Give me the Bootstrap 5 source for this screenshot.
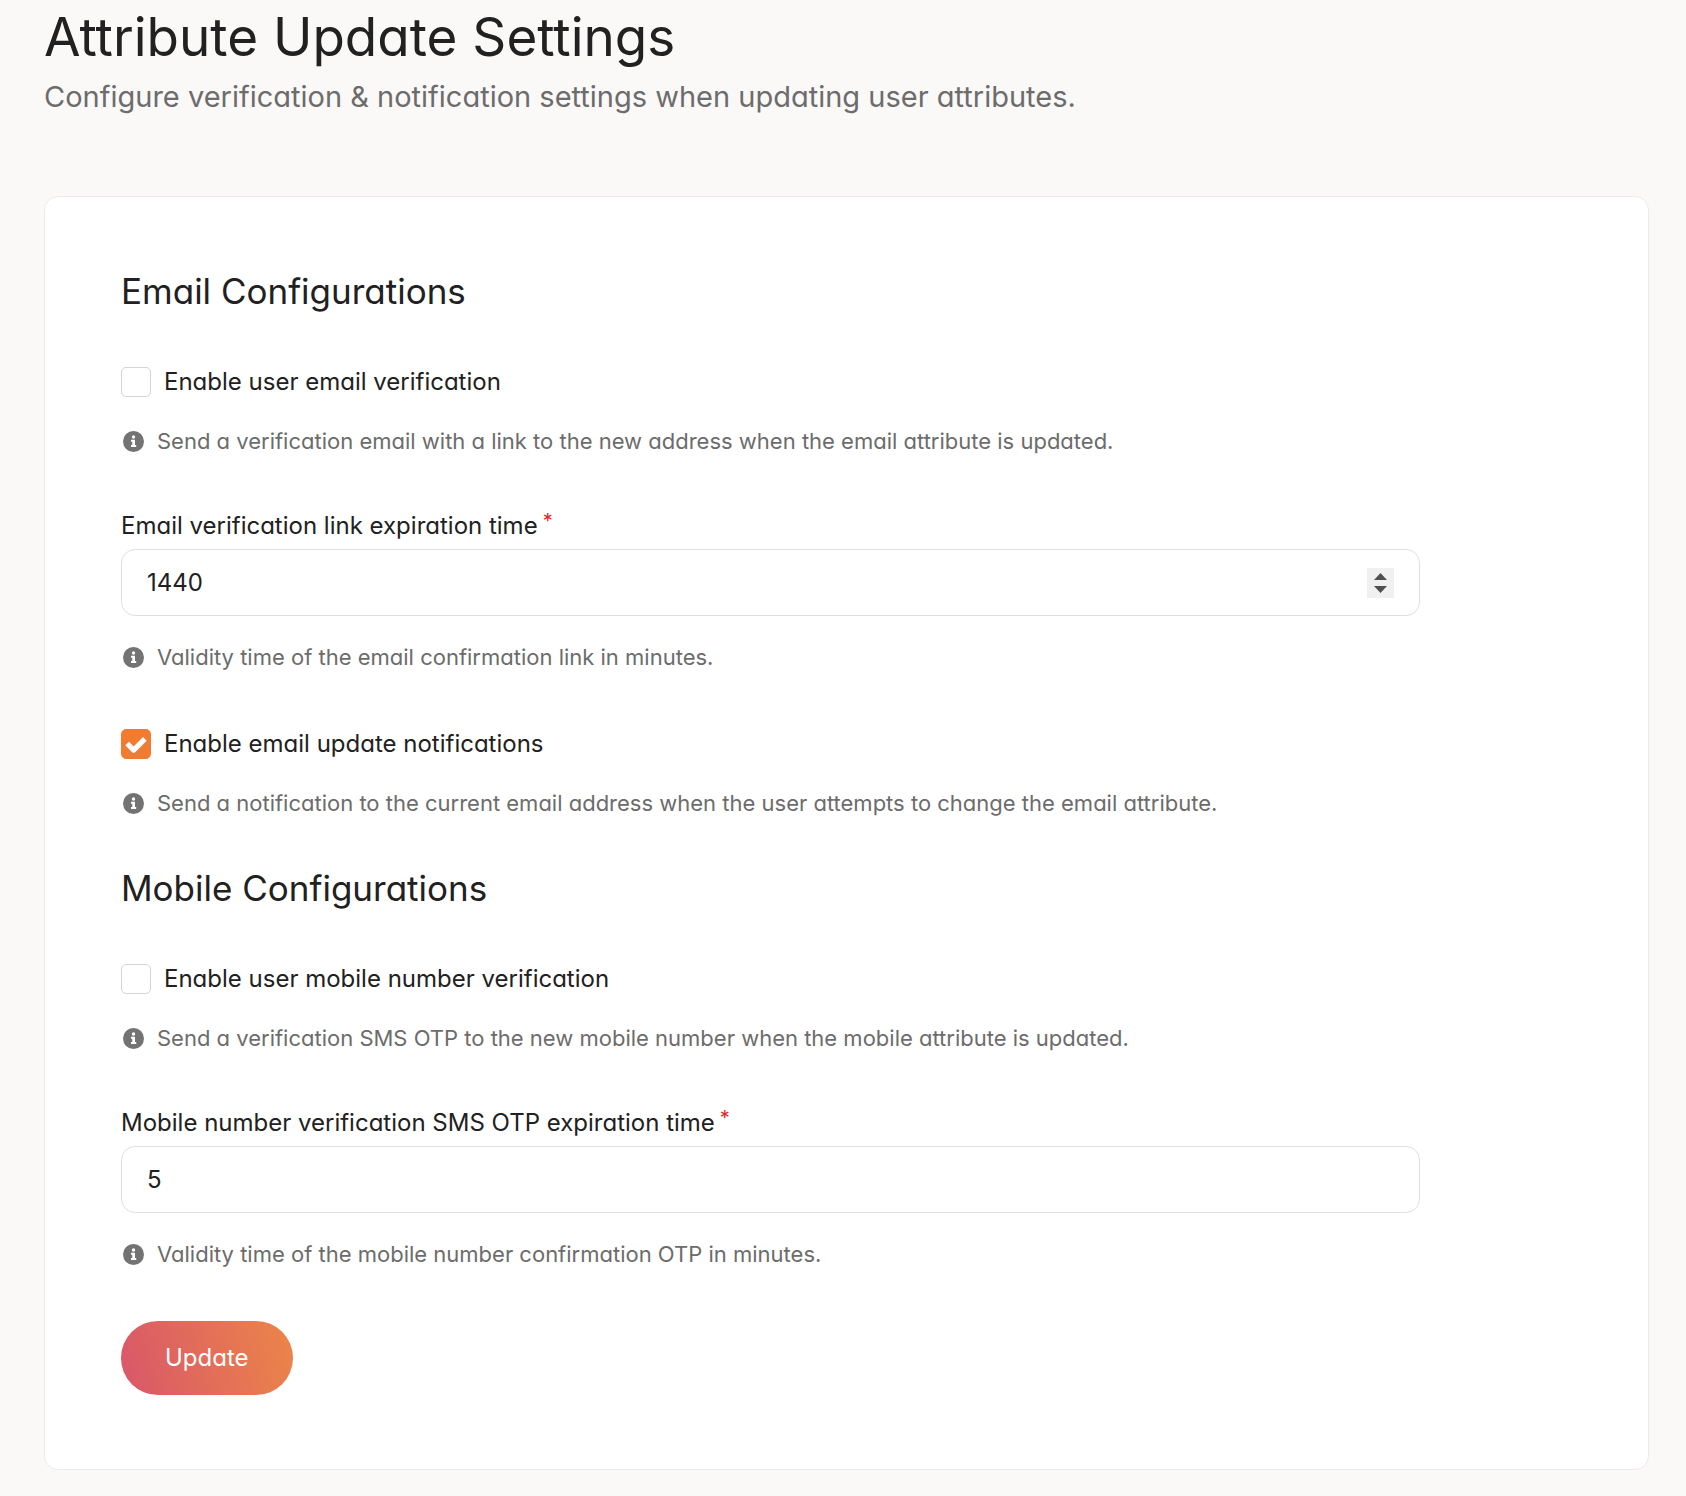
<!DOCTYPE html>
<html lang="en">
<head>
<meta charset="utf-8">
<meta name="viewport" content="width=device-width, initial-scale=1">
<title>Attribute Update Settings</title>
<link href="https://cdn.jsdelivr.net/npm/bootstrap@5.3.0/dist/css/bootstrap.min.css" rel="stylesheet">
<style>
body{background:#faf9f8;color:#212121;font-family:Inter,"Liberation Sans",sans-serif;font-feature-settings:"cv11";font-size:24px;line-height:32px}
.page-wrap{padding:7px 37px 24px 44px}
.page-title{font-size:53px;line-height:60px;font-weight:400}
.page-sub{font-size:29px;line-height:40px;color:#6c6c6c;margin-top:10px;margin-bottom:79px}
.settings-card{border:1px solid #ebebed;border-radius:14px;padding:74px 76px}
.section-title{font-size:35px;line-height:40px;font-weight:400;margin-bottom:55px}
.section-gap{margin-top:49px}
.field-gap{margin-top:53px}
.check-gap{margin-top:55px}
.field-group{max-width:calc(100% - 152px)}
.check-row{gap:13px}
.form-check-input.check-box{width:30px;height:30px;border:1px solid #d4d4d5;border-radius:5px}
.check-box:checked{background-color:#f17c31;border-color:#f17c31;background-size:100% 100%;background-image:url("data:image/svg+xml,%3Csvg xmlns='http://www.w3.org/2000/svg' viewBox='0 0 30 30'%3E%3Cpath d='M5.500 14.500l7 7L24.500 9.500' fill='none' stroke='white' stroke-width='5.500' stroke-linejoin='round'/%3E%3C/svg%3E")}
.hint-row{font-size:22px;color:#6c6c6c;gap:13px;padding-left:2px;margin-top:27px}
.field-group + .hint-row{margin-top:25px}
.hint-icon{width:21px;height:21px}
.field-label{margin-bottom:7px}
.req-star{color:#db2828;font-size:20px;line-height:22px;margin-left:5px;align-self:flex-start}
.form-control.num-box{height:67px;padding:0 25px;border:1px solid #dedfdf;border-radius:14px;font-size:24px;color:#212121;font-feature-settings:"cv11"}
.num-box::-webkit-inner-spin-button{-webkit-appearance:none;width:27px;height:30px;margin:0;opacity:0}
.num-box.with-steps::-webkit-inner-spin-button{opacity:1;background:#f0f0f0 url("data:image/svg+xml,%3Csvg xmlns='http://www.w3.org/2000/svg' viewBox='0 0 27 30'%3E%3Cpath d='M7 12l6.500-7 6.500 7zM7 18l6.500 7 6.500-7z' fill='%23505050'/%3E%3C/svg%3E") center/27px 30px no-repeat}
.btn.update-btn{margin-top:51px;height:74px;padding:0 44px;border:0;border-radius:37px;font-size:24px;font-feature-settings:"cv11";color:#fff;background:linear-gradient(75deg,#d9566a,#ea824b 92%)}
</style>
</head>
<body>
<svg class="d-none" xmlns="http://www.w3.org/2000/svg"><symbol id="info" viewBox="0 0 21 21"><circle cx="10.500" cy="10.500" r="10.500" fill="#737373"/><circle cx="10.500" cy="6" r="1.700" fill="#fff"/><path d="M8 8.800h4v5.200h1.200v2H8v-2h1.300v-3.200H8z" fill="#fff"/></symbol></svg>
<main class="page-wrap">
  <header>
    <h1 class="page-title mb-0">Attribute Update Settings</h1>
    <p class="page-sub">Configure verification &amp; notification settings when updating user attributes.</p>
  </header>
  <form class="card settings-card">
    <section>
      <h2 class="section-title">Email Configurations</h2>
      <div class="check-row d-flex align-items-center">
        <input class="form-check-input check-box m-0" type="checkbox" id="emailVerify">
        <label for="emailVerify">Enable user email verification</label>
      </div>
      <div class="hint-row d-flex align-items-center"><svg class="hint-icon" aria-hidden="true"><use href="#info"/></svg><span>Send a verification email with a link to the new address when the email attribute is updated.</span></div>
      <div class="field-group field-gap">
        <label class="field-label d-flex" for="emailExpiry">Email verification link expiration time<span class="req-star">*</span></label>
        <input class="form-control num-box with-steps" type="number" id="emailExpiry" value="1440">
      </div>
      <div class="hint-row d-flex align-items-center"><svg class="hint-icon" aria-hidden="true"><use href="#info"/></svg><span>Validity time of the email confirmation link in minutes.</span></div>
      <div class="check-row d-flex align-items-center check-gap">
        <input class="form-check-input check-box m-0" type="checkbox" id="emailNotify" checked>
        <label for="emailNotify">Enable email update notifications</label>
      </div>
      <div class="hint-row d-flex align-items-center"><svg class="hint-icon" aria-hidden="true"><use href="#info"/></svg><span>Send a notification to the current email address when the user attempts to change the email attribute.</span></div>
    </section>
    <section class="section-gap">
      <h2 class="section-title">Mobile Configurations</h2>
      <div class="check-row d-flex align-items-center">
        <input class="form-check-input check-box m-0" type="checkbox" id="mobileVerify">
        <label for="mobileVerify">Enable user mobile number verification</label>
      </div>
      <div class="hint-row d-flex align-items-center"><svg class="hint-icon" aria-hidden="true"><use href="#info"/></svg><span>Send a verification SMS OTP to the new mobile number when the mobile attribute is updated.</span></div>
      <div class="field-group field-gap">
        <label class="field-label d-flex" for="mobileExpiry">Mobile number verification SMS OTP expiration time<span class="req-star">*</span></label>
        <input class="form-control num-box" type="number" id="mobileExpiry" value="5">
      </div>
      <div class="hint-row d-flex align-items-center"><svg class="hint-icon" aria-hidden="true"><use href="#info"/></svg><span>Validity time of the mobile number confirmation OTP in minutes.</span></div>
    </section>
    <button class="btn update-btn align-self-start" type="submit">Update</button>
  </form>
</main>
<script src="https://cdn.jsdelivr.net/npm/bootstrap@5.3.0/dist/js/bootstrap.bundle.min.js"></script>
</body>
</html>
